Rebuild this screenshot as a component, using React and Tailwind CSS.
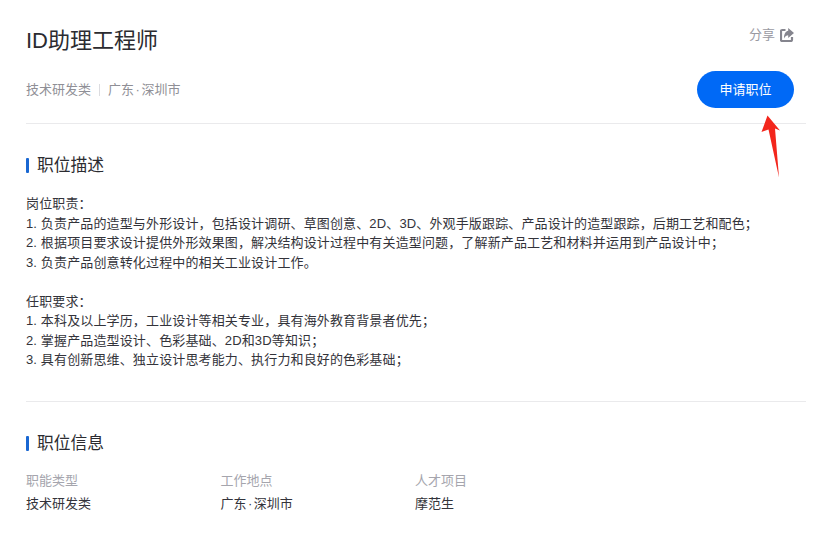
const font = { fontFamily: '"Liberation Sans", "Noto Sans CJK SC", sans-serif' };

const Place = () => (
    <span>广东<span className="mx-[1.5px]">·</span>深圳市</span>
);

const SectionTitle = ({ children }) => (
    <div className="flex items-center gap-2 h-6">
        <span className="w-[3px] h-[15px] rounded-[1px] bg-[#1967d2]" />
        <h2 className="text-[16.8px] leading-6 font-normal text-[#2b2b30] relative top-px">{children}</h2>
    </div>
);

const InfoItem = ({ label, value }) => (
    <div className="w-[194.5px]">
        <div className="text-[13px] leading-5 text-[#a5a5ad]">{label}</div>
        <div className="text-[13px] leading-5 mt-[3px] text-[#33333a]">{value}</div>
    </div>
);

const App = () => {
    return (
        <div className="relative w-[832px] h-[545px] overflow-hidden bg-white pl-[26px] pr-[26px]" style={font}>
            {/* Header */}
            <div className="flex justify-between h-[124px] border-b border-[#eaeaec]">
                <div>
                    <h1 className="mt-[25px] text-[22px] leading-8 font-normal text-[#2b2b30]">ID助理工程师</h1>
                    <div className="mt-[23px] flex items-center text-[13px] leading-5 text-[#8f8f96]">
                        <span>技术研发类</span>
                        <span className="mx-[8px] w-px h-[12px] bg-[#dcdce0]" />
                        <Place />
                    </div>
                </div>
                <div className="flex flex-col items-end pr-[12px]">
                    <div className="mt-[25px] flex items-center gap-[5px] text-[13px] leading-5 text-[#9a9aa2]">
                        <span>分享</span>
                        <svg width="14" height="14" viewBox="0 0 14 14" fill="none">
                            <path d="M5.5 2H2.2C1.5 2 1 2.5 1 3.2v8.6c0 .7.5 1.2 1.2 1.2h8.6c.7 0 1.2-.5 1.2-1.2V9" stroke="#85858e" strokeWidth="2.2" />
                            <path d="M8.2 0 14 5 8.2 10V7.2C6.6 7.2 5.2 8.2 4 10.6 4 5.8 5.8 3 8.2 2.8V0Z" fill="#85858e" />
                        </svg>
                    </div>
                    <button className="mt-[26px] w-[97px] h-[37px] rounded-full bg-[#0069f6] text-white text-[13px]">申请职位</button>
                </div>
            </div>

            {/* Description */}
            <div className="h-[278px] border-b border-[#eaeaec] pt-[29px]">
                <SectionTitle>职位描述</SectionTitle>
                <div className="mt-[17px] text-[13px] leading-[19.5px] tracking-[0.14px] text-[#33333a]">
                    <p>岗位职责：</p>
                    <p>1. 负责产品的造型与外形设计，包括设计调研、草图创意、2D、3D、外观手版跟踪、产品设计的造型跟踪，后期工艺和配色；</p>
                    <p>2. 根据项目要求设计提供外形效果图，解决结构设计过程中有关造型问题，了解新产品工艺和材料并运用到产品设计中；</p>
                    <p>3. 负责产品创意转化过程中的相关工业设计工作。</p>
                    <p className="mt-[19.5px]">任职要求：</p>
                    <p>1. 本科及以上学历，工业设计等相关专业，具有海外教育背景者优先；</p>
                    <p>2. 掌握产品造型设计、色彩基础、2D和3D等知识；</p>
                    <p>3. 具有创新思维、独立设计思考能力、执行力和良好的色彩基础；</p>
                </div>
            </div>

            {/* Info */}
            <div className="pt-[29px]">
                <SectionTitle>职位信息</SectionTitle>
                <div className="mt-[16px] flex">
                    <InfoItem label="职能类型" value="技术研发类" />
                    <InfoItem label="工作地点" value={<Place />} />
                    <InfoItem label="人才项目" value="摩范生" />
                </div>
            </div>

            {/* Red annotation arrow */}
            <svg className="absolute left-[760px] top-[114px]" width="26" height="66" viewBox="0 0 26 66">
                <path d="M7.5 1.5 1.5 18 8.5 15.5 19 63.5 15 14.5 20 16.5Z" fill="#f3261c" />
            </svg>
        </div>
    );
};

export default App;
